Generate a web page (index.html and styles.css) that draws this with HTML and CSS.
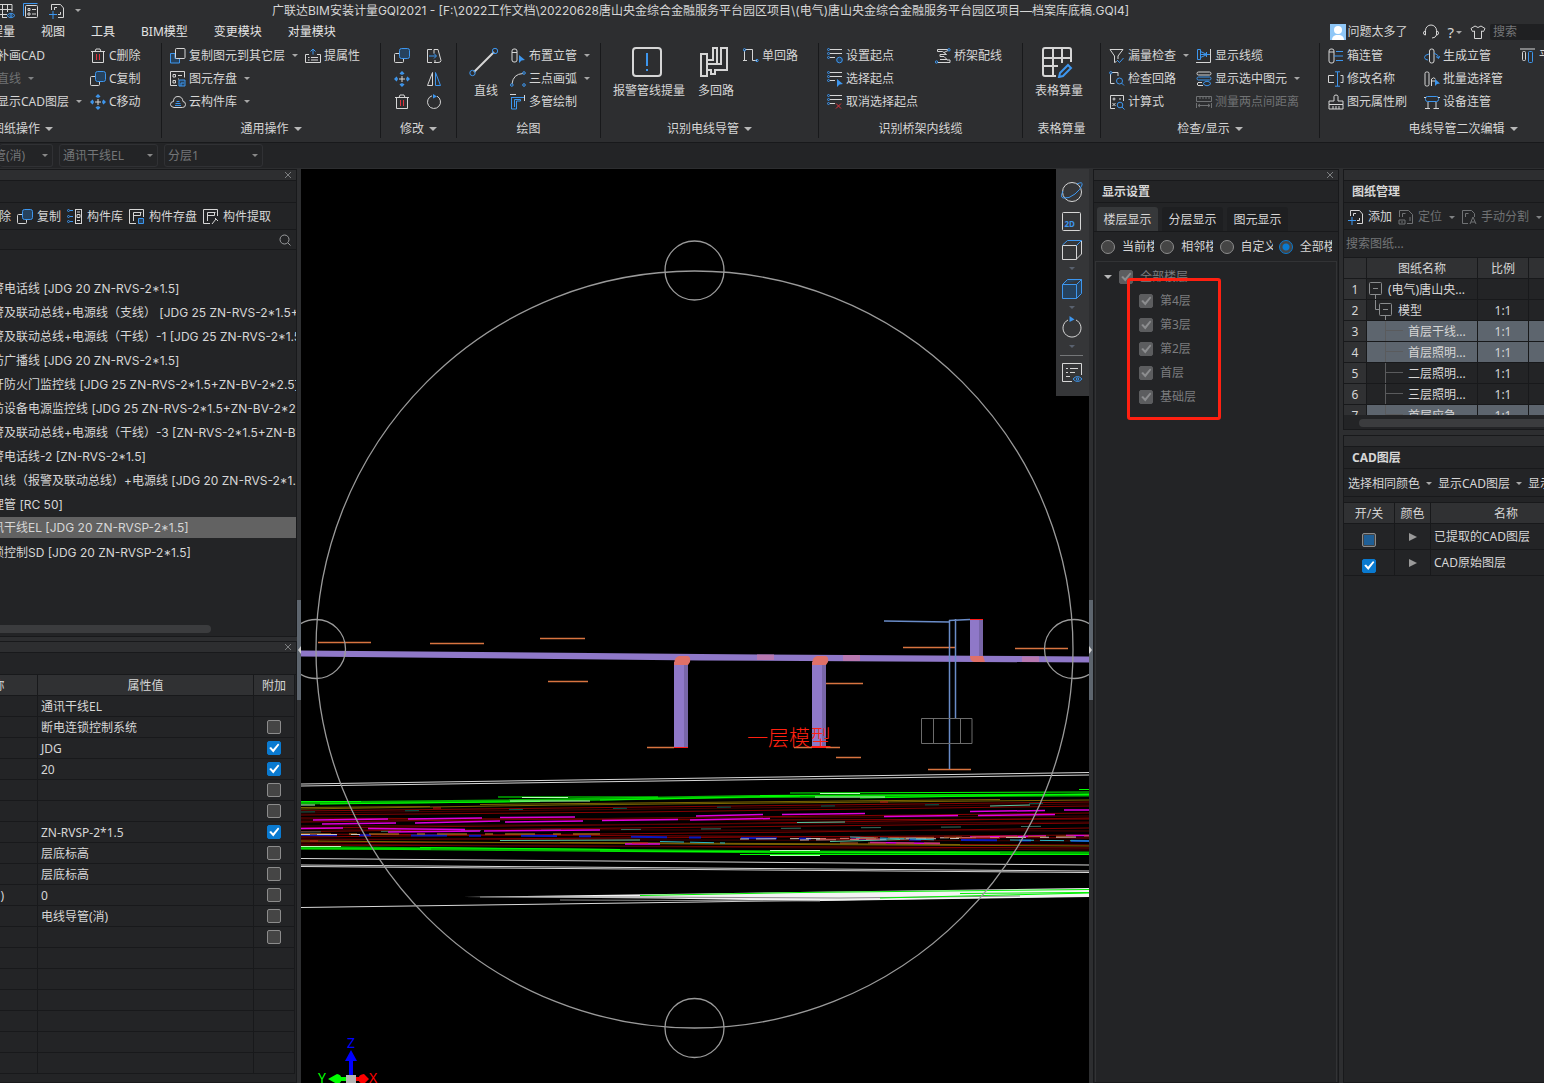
FILE: index.html
```html
<!DOCTYPE html>
<html lang="zh-CN">
<head>
<meta charset="utf-8">
<title>广联达BIM安装计量GQI2021</title>
<link rel="stylesheet" href="styles.css">
</head>
<body>
<svg class="defs" aria-hidden="true">
  <symbol id="grid-eye" viewBox="0 0 16 16"><path d="M0 1.500h12v7M0 6.500h12M0 11.500h7M2.500 1v13M7.500 1v8M2 14.500h5"/><path class="b" d="M7 12.500q4-4.500 8 0q-4 4.500-8 0z"/><circle class="b" cx="11" cy="12.500" r="1"/></symbol>
  <symbol id="doc-list" viewBox="0 0 16 16"><path class="b" d="M.5 13V.5h14"/><rect x="2.500" y="2.500" width="12" height="12" rx="1"/><path d="M5 5.500h2v2H5zM5 10h2v2H5zM9 6.500h4M9 11h4"/></symbol>
  <symbol id="add-sheet" viewBox="0 0 16 16"><path d="M2.500 7V1.500h9l3 3.500v9.500H9M5.500 7V4.500H8M11.500 9v2.500H9"/><path class="b" d="M0 11.500h8M4 8v8"/></symbol>
  <symbol id="sheet-pin" viewBox="0 0 16 16"><path d="M1.500 8V1.500h9l4 4v9H9M4.500 8V4.500h3M12 8v4M1 11h6v4H1zM3 13h2"/></symbol>
  <symbol id="sheet-cut" viewBox="0 0 16 16"><path d="M7 14.500H1.500v-13h9l3 3V8M4.500 8V4.500h3M9 15l3-7 3 7M10 13h4"/></symbol>
  <symbol id="trash" viewBox="0 0 16 16"><path d="M1 3.500h14M5 3.500l1-2.500h4l1 2.500M2.500 3.500v11h11v-11"/><path class="r" d="M6.500 6v6M9.500 6v6"/></symbol>
  <symbol id="copy" viewBox="0 0 16 16"><path d="M5 5.500H1.500q-1 0-1 1v7q0 1 1 1h7q1 0 1-1V11"/><rect class="bf" x="5.500" y=".5" width="10" height="10" rx="2"/></symbol>
  <symbol id="copy-to" viewBox="0 0 16 16"><path class="bf" d="M5 5.500H.5v9.500h9V10.500H5z"/><rect x="5.500" y=".5" width="9.500" height="10" rx="1"/></symbol>
  <symbol id="move" viewBox="0 0 16 16"><path d="M8 5v6M5 8h6"/><path class="b2s" d="M6 3l2-2 2 2M6 13l2 2 2-2M3 6L1 8l2 2M13 6l2 2-2 2M8 1v3M8 12v3M1 8h3M12 8h3"/></symbol>
  <symbol id="store" viewBox="0 0 16 16"><path d="M7 14.500H.5V.5h14v6M3 3.500h2.500V6H3zM3 9.500h2.500V12H3zM8 4.500h4M8 8h1"/><path class="bf" d="M9 9h6v6H9zM11 15v-3h3"/></symbol>
  <symbol id="cloud" viewBox="0 0 16 16"><path d="M4 13.500Q.5 13 .5 10.500q0-3 3-3Q3.500 2.500 8 2.500t5 5q2.500 0 2.500 3t-3 3z"/><path class="b" d="M5 11.500h6M5.500 9.500h5M6.500 7.500h3"/></symbol>
  <symbol id="attr-up" viewBox="0 0 16 16"><path d="M4 6.500H.5v8h15v-8H12M3 9.500h1.500M6 9.500h7M3 12h1.500M6 12h7"/><path class="b" d="M8 6.500V1M5.500 3.500L8 1l2.500 2.500"/></symbol>
  <symbol id="extend" viewBox="0 0 16 16"><path d="M6 1.500H1.500v13H6M8 1.500h4l3 11q0 2-3 2H8M8 1.500v4M9 12v2"/><path class="b" d="M3 8h7M8 5.500L10.500 8 8 10.500"/></symbol>
  <symbol id="flip" viewBox="0 0 16 16"><path d="M6.500 1.500v13H1.500z"/><path class="b" d="M9.500 1.500v13H14.500z"/></symbol>
  <symbol id="rotate" viewBox="0 0 16 16"><path d="M6 1.800A6.500 6.500 0 1 0 11 2.200"/><path class="bfill" d="M7 0l4 2.500L7 4.500z"/></symbol>
  <symbol id="orbit-turn" viewBox="0 0 24 24"><path d="M8 4A9 9 0 1 0 16 4"/><path class="bfill" d="M9.500 0l5 3.500-5 2.500z"/></symbol>
  <symbol id="pipe" viewBox="0 0 16 16"><rect x="2" y="1" width="5" height="13" rx="2"/><path d="M2 4.500h5"/><path class="bfill" d="M9 7l6 5-3.500.5L9 15z"/></symbol>
  <symbol id="arc" viewBox="0 0 16 16"><path d="M2 13Q3 3 13 2.500"/><circle class="b" cx="1.800" cy="14" r="1.300"/><circle class="b" cx="14" cy="2" r="1.300"/><circle class="b" cx="14" cy="14" r="1.300"/></symbol>
  <symbol id="multi" viewBox="0 0 16 16"><path class="b" d="M1.500 3v12h5V7h4V5.500H4.500V13M1.500 3.500h13"/><path d="M0 .5h6M14.500 1v6"/></symbol>
  <symbol id="single" viewBox="0 0 16 16"><path d="M1.500 2.500v10M2 1.500h7.500v11H14M0 12.500h4"/><circle class="b" cx="1.500" cy="1.800" r="1.200"/><circle class="b" cx="14" cy="12.500" r="1.200"/></symbol>
  <symbol id="lines" viewBox="0 0 16 16"><path d="M3 1.500h12M3 5.500h12M3 9.500h5"/><circle class="b" cx="1.500" cy="1.500" r="1"/><circle class="b" cx="1.500" cy="5.500" r="1"/><circle class="b" cx="1.500" cy="9.500" r="1"/></symbol>
  <symbol id="start-set" viewBox="0 0 16 16"><use href="#lines"/><circle class="bf" cx="12.500" cy="12" r="2.800"/></symbol>
  <symbol id="start-pick" viewBox="0 0 16 16"><use href="#lines"/><path class="bfill" d="M10 8l6 5-3.500.5L10 16z"/></symbol>
  <symbol id="start-cancel" viewBox="0 0 16 16"><use href="#lines"/><path class="r" d="M9 9.500l5 5M14 9.500l-5 5"/></symbol>
  <symbol id="bridge" viewBox="0 0 16 16"><path d="M13 1.500H2.500v2h5l4 3H5v2h4l3 3H5M3 14.500h12v-2.500h-3M13 2.500L9 4.500"/><circle class="b" cx="14" cy="1.800" r="1.200"/><circle class="b" cx="1.500" cy="14" r="1.200"/></symbol>
  <symbol id="funnel" viewBox="0 0 16 16"><path d="M1 1.500h13L9 8v3M1 1.500L5.500 8v6.500l2-1"/><path class="b" d="M8 12l2.500 2.500L14.500 10"/></symbol>
  <symbol id="loop-check" viewBox="0 0 16 16"><path d="M1.500 3v9.500h4M3 1.500h6V5"/><circle class="b" cx="1.800" cy="1.800" r="1.200"/><circle class="b" cx="10.500" cy="10" r="3"/><path class="b" d="M12.500 12l2.500 2.500"/></symbol>
  <symbol id="formula" viewBox="0 0 16 16"><path d="M6 14.500H1.500v-13h13V7M3.500 5h3M5 3.500v3M3.500 9l3 3M6.500 9l-3 3M10 5h2"/><circle class="b" cx="11" cy="11" r="2.800"/><path class="b" d="M13 13l2.500 2.500"/></symbol>
  <symbol id="cable" viewBox="0 0 16 16"><path d="M0 14.500h14.500V1"/><path class="b" d="M1.500 1.500h3v10h-3zM4.500 3.500L10 6M4.500 9.500L10 7M5 6.500h9M10.500 4v5"/></symbol>
  <symbol id="show-sel" viewBox="0 0 16 16"><rect x="1" y="1" width="14" height="3" rx="1.500"/><rect class="b" x="1" y="6" width="14" height="3" rx="1.500"/><path d="M7 14.500H2q-1.500-1.500 0-3h4"/><path class="b" d="M7 12.500q4-4.500 8 0q-4 4.500-8 0z"/></symbol>
  <symbol id="measure" viewBox="0 0 16 16"><path d="M.5 2.500h15v5H.5zM4 3v2M7 3v2M10 3v2M13 3v2M.5 9v5M15.500 9v5M2 11.500h12M4 10l-2 1.500 2 1.500M12 10l2 1.500-2 1.500"/></symbol>
  <symbol id="box-pipe" viewBox="0 0 16 16"><rect x="1" y="1" width="5" height="14" rx="2"/><path d="M1 4h5"/><path class="b" d="M8 3.500h7M6 8h9M8 12.500h7"/></symbol>
  <symbol id="rename" viewBox="0 0 16 16"><path d="M6 4.500H.5v7H6M12.500 4.500h2.500v7h-2.500"/><path class="b" d="M9.500 1v14M7 .8h5M7 15.200h5"/></symbol>
  <symbol id="brush" viewBox="0 0 16 16"><path d="M6 7V2.500q0-1.500 2-1.500t2 1.500V7h5v3.500H1V7zM1 10.500V15h14v-4.500M5 12v3M8 12v3M11 12v3"/></symbol>
  <symbol id="riser" viewBox="0 0 16 16"><rect x="5.500" y="1" width="4.500" height="14" rx="2"/><path class="b" d="M5 6Q0 7 .5 9.500T4 12M10 5q5 2 4.500 5M12 8.500l2.500 2L16 8"/></symbol>
  <symbol id="batch" viewBox="0 0 16 16"><rect x="1" y="1" width="4" height="14" rx="1.500"/><path d="M7.500 15V8q2.500-2.500 4 0M7.500 10h4"/><path class="bfill" d="M11 8l5 4.500-3 .5-2 2z"/></symbol>
  <symbol id="device" viewBox="0 0 16 16"><rect class="b" x="1.500" y="2.500" width="13" height="5" rx="2"/><path d="M4 8v6.500M12 8v6.500M1 14.500h5M9.500 14.500H15M0 3.500h2M14 3.500h2"/></symbol>
  <symbol id="align" viewBox="0 0 16 16"><path d="M0 1h15"/><rect x="2.500" y="3.500" width="3" height="9" rx="1"/><rect class="b" x="8.500" y="3.500" width="4" height="11" rx="1"/></symbol>
  <symbol id="lib" viewBox="0 0 16 16"><rect x="8.500" y=".5" width="6" height="14"/><path d="M10 3h3M10 5.500h3v3h-3zM10 11.500h3"/><path class="b" d="M3 1.500h3M3 7.500h3M3 12.500h3"/><circle class="b" cx="1.500" cy="1.500" r="1"/><circle class="b" cx="1.500" cy="7.500" r="1"/><circle class="b" cx="1.500" cy="12.500" r="1"/></symbol>
  <symbol id="part-save" viewBox="0 0 16 16"><path d="M7 14.500H.5v-14h14V8M4.500 12V3.500h8M4.500 6.500h7v-3"/><path class="bf" d="M9.500 9.500h5v5h-5z"/></symbol>
  <symbol id="part-pick" viewBox="0 0 16 16"><path d="M7 14.500H.5v-14h14V7M4.500 12V3.500h8M4.500 6.500h7v-3M9 15l4-5M12 9l3 3"/></symbol>
  <symbol id="search" viewBox="0 0 16 16"><circle cx="7.500" cy="7.500" r="4.500"/><path d="M11 11l2.500 2.500"/></symbol>
  <symbol id="close" viewBox="0 0 8 8"><path d="M1 1l6 6M7 1L1 7"/></symbol>
  <symbol id="headset" viewBox="0 0 16 16"><path d="M2.500 8V6.500a5.500 5.500 0 0 1 11 0V8M2.500 7Q.5 7 .5 9t2 2zM13.500 7q2 0 2 2t-2 2zM13.500 11q-1 3-4.500 3"/></symbol>
  <symbol id="shirt" viewBox="0 0 16 16"><path d="M5 2q3 3 6 0l4 2.500-1.500 3-2-.5v7.500h-7V7l-2 .5L1 4.500z"/></symbol>
  <symbol id="big-line" viewBox="0 0 32 32"><path class="w2" d="M6 26L26 6"/><circle class="b" cx="4.500" cy="27" r="2.700"/><circle class="b" cx="27" cy="5" r="2.700"/></symbol>
  <symbol id="big-alarm" viewBox="0 0 32 32"><rect class="w2" x="2" y="2" width="28" height="28" rx="3"/><path class="b2" d="M16 7v13M16 23v2"/></symbol>
  <symbol id="big-loop" viewBox="0 0 32 32"><path class="w2" d="M3 30V8h6v22zM9 14h6V2h4v16H9M19 18h4V2h6v22H17v4h-4v-4H9"/></symbol>
  <symbol id="big-table" viewBox="0 0 32 32"><path class="w2" d="M15 30H4q-2 0-2-2V4q0-2 2-2h24q2 0 2 2v12M2 12h28M2 20h15M12 2v28M21 2v15"/><path class="b2" d="M19 27l8-8 3 3-8 8-4 1z"/></symbol>
  <symbol id="orbit" viewBox="0 0 24 24"><circle cx="12" cy="12" r="9.500"/><path class="b" d="M17 4q6-3 5 1t-7 9-12 4q-3-1 0-7"/></symbol>
  <symbol id="view-2d" viewBox="0 0 24 24"><rect x="2.500" y="3.500" width="18" height="18" rx="1"/></symbol>
  <symbol id="cube" viewBox="0 0 24 24"><path d="M2.500 7.500h14v14h-14zM16.500 21l5-5V3"/><path class="b" d="M2.500 7l5-4.500H21.500l-5 5"/></symbol>
  <symbol id="cube-solid" viewBox="0 0 24 24"><path class="bf" d="M2.500 7.500h14v14h-14zM16.500 21.500l5-5v-14l-5 5M2.500 7.500l5-5h14"/></symbol>
  <symbol id="view-list" viewBox="0 0 24 24"><path d="M12 20.500H2.500v-18h19V14M6 7.500h2M10 7.500h8M6 11.500h2M10 11.500h5M6 15.500h4"/><path class="b" d="M13 18q4.500-5 9 0q-4.500 5-9 0z"/><circle class="b" cx="17.500" cy="18" r="1.200"/></symbol>
  <symbol id="branch" viewBox="0 0 36 20"><path d="M18.500 0v20M19 9.500h17"/></symbol>
  <symbol id="node-root" viewBox="0 0 16 20"><rect x="2.500" y="3.500" width="12" height="12" rx="1"/><path d="M6 9.500h5M8.500 16v4"/></symbol>
  <symbol id="node-sub" viewBox="0 0 26 20"><rect x="12.500" y="3.500" width="12" height="12" rx="1"/><path d="M16 9.500h5M18.500 16v4M8.500 0v9.500h4"/></symbol>
</svg>

<header class="titlebar">
  <button class="quick" aria-label="工程量"><svg class="ico"><use href="#grid-eye"/></svg></button>
  <button class="quick" aria-label="列表"><svg class="ico"><use href="#doc-list"/></svg></button>
  <button class="quick" aria-label="添加图纸"><svg class="ico"><use href="#add-sheet"/></svg></button>
  <button class="quick more" aria-label="更多"><i class="caret"></i></button>
  <h1>广联达BIM安装计量GQI2021 - [F:\2022工作文档\20220628唐山央金综合金融服务平台园区项目\(电气)唐山央金综合金融服务平台园区项目—档案库底稿.GQI4]</h1>
</header>

<nav class="menubar">
  <a href="#">程量</a><a href="#">视图</a><a href="#">工具</a><a href="#">BIM模型</a><a href="#">变更模块</a><a href="#">对量模块</a>
  <div class="account">
    <svg class="avatar" viewBox="0 0 16 16"><rect width="16" height="16" fill="#8fc7f7"/><circle cx="8" cy="6" r="4" fill="#fff"/><path d="M2 16q0-4 4-5h4q4 1 4 5z" fill="#fff"/></svg>
    <span class="user">问题太多了</span>
    <svg class="ico"><use href="#headset"/></svg>
    <button class="help">?<i class="caret"></i></button>
    <svg class="ico"><use href="#shirt"/></svg>
    <input class="find" type="text" placeholder="搜索" aria-label="搜索">
  </div>
</nav>

<section class="ribbon">
  <div class="group g-sheet">
    <div class="cmds">
      <button>补画CAD</button>
      <button disabled>直线<i class="caret"></i></button>
      <button>显示CAD图层<i class="caret"></i></button>
      <button><svg class="ico"><use href="#trash"/></svg>C删除</button>
      <button><svg class="ico"><use href="#copy"/></svg>C复制</button>
      <button><svg class="ico"><use href="#move"/></svg>C移动</button>
    </div>
    <div class="label">图纸操作<i class="caret big"></i></div>
  </div>
  <div class="group g-common">
    <div class="cmds">
      <button><svg class="ico"><use href="#copy-to"/></svg>复制图元到其它层<i class="caret"></i></button>
      <button><svg class="ico"><use href="#store"/></svg>图元存盘<i class="caret"></i></button>
      <button><svg class="ico"><use href="#cloud"/></svg>云构件库<i class="caret"></i></button>
      <button><svg class="ico"><use href="#attr-up"/></svg>提属性</button>
    </div>
    <div class="label">通用操作<i class="caret big"></i></div>
  </div>
  <div class="group g-edit">
    <div class="cmds">
      <button aria-label="复制"><svg class="ico"><use href="#copy"/></svg></button>
      <button aria-label="移动"><svg class="ico"><use href="#move"/></svg></button>
      <button aria-label="删除"><svg class="ico"><use href="#trash"/></svg></button>
      <button aria-label="延伸"><svg class="ico"><use href="#extend"/></svg></button>
      <button aria-label="镜像"><svg class="ico"><use href="#flip"/></svg></button>
      <button aria-label="旋转"><svg class="ico"><use href="#rotate"/></svg></button>
    </div>
    <div class="label">修改<i class="caret big"></i></div>
  </div>
  <div class="group g-draw">
    <div class="cmds">
      <button class="large"><svg><use href="#big-line"/></svg>直线</button>
      <button><svg class="ico"><use href="#pipe"/></svg>布置立管<i class="caret"></i></button>
      <button><svg class="ico"><use href="#arc"/></svg>三点画弧<i class="caret"></i></button>
      <button><svg class="ico"><use href="#multi"/></svg>多管绘制</button>
    </div>
    <div class="label">绘图</div>
  </div>
  <div class="group g-wire">
    <div class="cmds">
      <button class="large"><svg><use href="#big-alarm"/></svg>报警管线提量</button>
      <button class="large"><svg><use href="#big-loop"/></svg>多回路</button>
      <button><svg class="ico"><use href="#single"/></svg>单回路</button>
    </div>
    <div class="label">识别电线导管<i class="caret big"></i></div>
  </div>
  <div class="group g-bridge">
    <div class="cmds">
      <button><svg class="ico"><use href="#start-set"/></svg>设置起点</button>
      <button><svg class="ico"><use href="#start-pick"/></svg>选择起点</button>
      <button><svg class="ico"><use href="#start-cancel"/></svg>取消选择起点</button>
      <button><svg class="ico"><use href="#bridge"/></svg>桥架配线</button>
    </div>
    <div class="label">识别桥架内线缆</div>
  </div>
  <div class="group g-table">
    <div class="cmds">
      <button class="large"><svg><use href="#big-table"/></svg>表格算量</button>
    </div>
    <div class="label">表格算量</div>
  </div>
  <div class="group g-check">
    <div class="cmds">
      <button><svg class="ico"><use href="#funnel"/></svg>漏量检查<i class="caret"></i></button>
      <button><svg class="ico"><use href="#loop-check"/></svg>检查回路</button>
      <button><svg class="ico"><use href="#formula"/></svg>计算式</button>
      <button><svg class="ico"><use href="#cable"/></svg>显示线缆</button>
      <button><svg class="ico"><use href="#show-sel"/></svg>显示选中图元<i class="caret"></i></button>
      <button disabled><svg class="ico"><use href="#measure"/></svg>测量两点间距离</button>
    </div>
    <div class="label">检查/显示<i class="caret big"></i></div>
  </div>
  <div class="group g-second">
    <div class="cmds">
      <button><svg class="ico"><use href="#box-pipe"/></svg>箱连管</button>
      <button><svg class="ico"><use href="#rename"/></svg>修改名称</button>
      <button><svg class="ico"><use href="#brush"/></svg>图元属性刷</button>
      <button><svg class="ico"><use href="#riser"/></svg>生成立管</button>
      <button><svg class="ico"><use href="#batch"/></svg>批量选择管</button>
      <button><svg class="ico"><use href="#device"/></svg>设备连管</button>
      <button><svg class="ico"><use href="#align"/></svg>平</button>
    </div>
    <div class="label">电线导管二次编辑<i class="caret big"></i></div>
  </div>
</section>

<div class="pickers">
  <span class="pick"><select disabled aria-label="构件类型"><option>管(消)</option></select><i class="caret"></i></span>
  <span class="pick"><select disabled aria-label="构件"><option>通讯干线EL</option></select><i class="caret"></i></span>
  <span class="pick"><select disabled aria-label="分层"><option>分层1</option></select><i class="caret"></i></span>
</div>

<main class="work">
  <aside class="dock">
    <section class="panel parts">
      <div class="strip"><button aria-label="关闭"><svg><use href="#close"/></svg></button></div>
      <div class="head"></div>
      <div class="tools">
        <button class="cut">除</button>
        <button><svg class="ico"><use href="#copy"/></svg>复制</button>
        <button><svg class="ico"><use href="#lib"/></svg>构件库</button>
        <button><svg class="ico"><use href="#part-save"/></svg>构件存盘</button>
        <button><svg class="ico"><use href="#part-pick"/></svg>构件提取</button>
      </div>
      <div class="search"><input type="text" aria-label="搜索构件"><svg class="ico"><use href="#search"/></svg></div>
      <ul class="list">
        <li>警电话线 [JDG 20 ZN-RVS-2*1.5]</li>
        <li>警及联动总线+电源线（支线） [JDG 25 ZN-RVS-2*1.5+ZN-BV-2*2.5]</li>
        <li>警及联动总线+电源线（干线）-1 [JDG 25 ZN-RVS-2*1.5+ZN-BV-2*2.5]</li>
        <li>防广播线 [JDG 20 ZN-RVS-2*1.5]</li>
        <li>开防火门监控线 [JDG 25 ZN-RVS-2*1.5+ZN-BV-2*2.5]</li>
        <li>防设备电源监控线 [JDG 25 ZN-RVS-2*1.5+ZN-BV-2*2.5]</li>
        <li>警及联动总线+电源线（干线）-3 [ZN-RVS-2*1.5+ZN-BV-2*2.5]</li>
        <li>警电话线-2 [ZN-RVS-2*1.5]</li>
        <li>讯线（报警及联动总线）+电源线 [JDG 20 ZN-RVS-2*1.5]</li>
        <li>埋管 [RC 50]</li>
        <li class="on">讯干线EL [JDG 20 ZN-RVSP-2*1.5]</li>
        <li>锁控制SD [JDG 20 ZN-RVSP-2*1.5]</li>
      </ul>
      <div class="hbar"></div>
    </section>
    <section class="panel props">
      <div class="strip"><button aria-label="关闭"><svg><use href="#close"/></svg></button></div>
      <div class="head"></div>
      <table>
        <colgroup><col class="c-name"><col><col class="c-add"></colgroup>
        <thead><tr><th>名称</th><th>属性值</th><th>附加</th></tr></thead>
        <tbody>
          <tr><td></td><td>通讯干线EL</td><td></td></tr>
          <tr><td></td><td>断电连锁控制系统</td><td><input type="checkbox" aria-label="附加 系统类型"></td></tr>
          <tr><td></td><td>JDG</td><td><input type="checkbox" checked aria-label="附加 导管材质"></td></tr>
          <tr><td></td><td>20</td><td><input type="checkbox" checked aria-label="附加 管径"></td></tr>
          <tr><td></td><td></td><td><input type="checkbox" aria-label="附加"></td></tr>
          <tr><td></td><td></td><td><input type="checkbox" aria-label="附加"></td></tr>
          <tr><td></td><td>ZN-RVSP-2*1.5</td><td><input type="checkbox" checked aria-label="附加 导线规格"></td></tr>
          <tr><td></td><td>层底标高</td><td><input type="checkbox" aria-label="附加 起点标高"></td></tr>
          <tr><td></td><td>层底标高</td><td><input type="checkbox" aria-label="附加 终点标高"></td></tr>
          <tr><td>)</td><td>0</td><td><input type="checkbox" aria-label="附加 长度"></td></tr>
          <tr><td></td><td>电线导管(消)</td><td><input type="checkbox" aria-label="附加 类型"></td></tr>
          <tr><td></td><td></td><td><input type="checkbox" aria-label="附加"></td></tr>
          <tr><td></td><td></td><td></td></tr>
          <tr><td></td><td></td><td></td></tr>
          <tr><td></td><td></td><td></td></tr>
          <tr><td></td><td></td><td></td></tr>
          <tr><td></td><td></td><td></td></tr>
          <tr><td></td><td></td><td></td></tr>
        </tbody>
      </table>
    </section>
  </aside>

  <div class="split"><i></i></div>

  <section class="stage">
    <svg class="scene" viewBox="301 169 788 914" preserveAspectRatio="xMidYMid slice">
      <!-- storey outlines -->
      <g stroke="#d8d8d8" stroke-width="1">
        <path d="M301 784L1089 772.500M301 786L1089 775M301 858.500L1089 865M301 865L1089 871M301 866.500L1089 872.500M301 907.500L700 902 1089 896"/>
      </g>
      <path d="M463 897L700 893.500 1089 888V897L820 901 660 898.500z" fill="#f4f4f4"/>
      <path d="M480 897h160l200 1 180-2M560 900l260 1" stroke="#8a8a8a"/>
      <path d="M640 895.500L800 892.500 1089 889.500M880 898l209-5M960 893.500l129-1" stroke="#00f000" stroke-width="1"/>
      <!-- green outlines of the cable zone -->
      <g stroke="#00b400" stroke-width="3"><path d="M301 803L500 801 750 796.500 1089 795M301 847.500L500 849.500 800 852 1089 853"/></g>
      <g stroke="#00ff00" stroke-width="1"><path d="M301 801.500h60M320 804l220-2.500M498 797h160M600 800l200-4M760 795.500l329-1M860 798l229-4M301 849h130M420 847.500l200 2M600 851l400 2M740 854.500l349 0M1079 789.500h10M790 793l299-1"/></g>
      <path d="M522 797.500h46M820 793.500h40M301 805h14M301 846.500h40M815 797h70M770 855.500h50M770 850.500h50M510 801h80" stroke="#b8ffb8"/>
      <!-- dark red runs -->
      <g stroke="#860000">
        <path d="M301 811L1089 802M301 815L640 812 1089 806M301 822L1089 813M301 828L700 824 1089 818M301 831.500L1089 823M301 837L800 832 1089 828M301 840L1089 835M301 842L1089 845M301 845L1089 848M301 834L1089 838M301 818L760 820 1089 819"/>
      </g>
      <g stroke="#4a0000"><path d="M301 813L1089 804M301 820L1089 816M301 826L1089 822M301 839L1089 841M301 829L1089 831M301 844L1089 850"/></g>
      <g stroke="#7c6600"><path d="M301 809L560 805 1089 800M301 807.500L430 806.500M480 804.500L1000 799.500M301 841L700 844 1089 846M560 842.500L960 844.500"/></g>
      <path d="M301 812L1089 803" stroke="#006050" stroke-dasharray="14 90"/>
      <path d="M301 832L1089 826" stroke="#3a7060" stroke-dasharray="20 60"/>
      <!-- magenta runs -->
      <g stroke="#e000e0" stroke-width="1.500">
        <path d="M313 820L388 819M322 824L396 823M408 819L482 818M415 823L500 821M368 828.500L465 829.500M500 817.500L575 817M505 822L583 821M484 831L600 830M388 832L480 831M602 820.500L678 819.500M690 820L770 818.500M696 816L763 814.500M782 814.500L865 813.500M884 816.500L958 815.500M970 811.500L1045 810.500M978 815.500L1055 814.500M1064 810L1089 810M301 828.500L343 828M870 842.500L940 843.500M970 837L1046 836M1066 835.500L1089 835.500M625 844L660 844"/>
      </g>
      <!-- mixed wiring -->
      <path d="M301 835L560 836 840 839 1089 841" stroke="#0a18c0" stroke-width="2" stroke-dasharray="36 22 12 40"/>
      <path d="M301 834L600 834" stroke="#c98a20" stroke-dasharray="30 18 8 12"/>
      <path d="M301 834.500L360 834.500M800 840L960 838.500M740 839L1089 837" stroke="#d0c8c0" stroke-dasharray="9 7 20 14"/>
      <path d="M660 841.500L725 843M1010 840L1089 841M850 837l90 3" stroke="#2ab8c8" stroke-dasharray="24 6"/>
      <path d="M500 840.500L640 840M830 841.500L900 839.500M797 822.500L845 822M990 806l40-1" stroke="#58c8a0"/>
      <path d="M433 808h8M632 843h16M880 802h8M310 841h8M820 839h60M960 838h40" stroke="#d01818"/>
      <path d="M860 838L1089 836M840 843l100 0" stroke="#b05a28" stroke-dasharray="18 10"/>
      <!-- main conduit and drops -->
      <path d="M301 650.500L700 654 1089 656.500V662.500L700 660.500 301 656.500z" fill="#8f78c8"/>
      <g fill="#8f78c8"><path d="M674 662h14v85h-14zM812 662h14v85h-14zM970 620h13v38h-13z"/></g>
      <g fill="#7866a8"><path d="M684 664h4v83h-4zM822 664h4v83h-4zM979 620h4v38h-4z"/></g>
      <g fill="#b878b0"><path d="M757 654.500h17v5.500h-17zM843 655h17v6h-17zM1022 656.500h17v5.500h-17z"/></g>
      <g fill="#e07068"><path d="M674 665q0-8 5-9h8q4 0 3 6l-2 3zM812 665q0-8 5-9h8q4 0 3 6l-2 3zM970 656h13l2 6h-11q-4-1-4-6z"/></g>
      <path d="M674 747.500h14M812 747.500h14M970 619.500h13" stroke="#ff1a1a"/>
      <!-- fixtures -->
      <g stroke="#d87440" stroke-width="1.500"><path d="M318 642.500H371M430 643.500H484M540 638.500H585M548 681.500H588M647 747.500H674M826 683.500H863M794 747.500H812M826 747.500H840M836 757.500H861M903 647.500H956M1015 648.500H1068M928 769.500H971"/></g>
      <g stroke="#6a8cc8" stroke-width="1.500"><path d="M884 621L949 622M949.500 620V769M955.500 619V718M949 620.500L970 619.500"/></g>
      <path d="M921.500 718.500H972V743.500H921.500zM933.500 718V743M960.500 718V743" stroke="#6c6c6c"/>
      <text class="mark" x="747" y="745">一层模型</text>
      <!-- orbit gizmo -->
      <g stroke="#9a9a9a" stroke-width="1.300">
        <circle cx="694.500" cy="649.500" r="378.500"/>
        <circle cx="694.500" cy="270.500" r="29.500"/><circle cx="316" cy="649" r="29.500"/><circle cx="1074" cy="649" r="29.500"/><circle cx="694.500" cy="1028" r="29.500"/>
      </g>
      <!-- axis triad -->
      <path d="M351 1050l6 11h-4v15h-4v-15h-4z" fill="#0000ff"/>
      <path d="M328 1079l9-5q4 1 4 3h6v4h-6q0 2-4 3z" fill="#00ff00"/>
      <path d="M369 1079l-5-5q-5 1-5 3h-3v4h3q0 2 5 3z" fill="#ff0000"/>
      <path d="M346 1075h10v9h-10z" fill="#b4b4b4"/>
      <text class="axis" x="347" y="1048" fill="#0000ff">Z</text>
      <text class="axis" x="318" y="1083" fill="#00ff00">Y</text>
      <text class="axis" x="369" y="1083" fill="#ff0000">X</text>
    </svg>
    <div class="viewtools">
      <button aria-label="动态观察"><svg><use href="#orbit"/></svg></button>
      <button class="two" aria-label="二维"><svg><use href="#view-2d"/></svg><span>2D</span></button>
      <button aria-label="线框"><svg><use href="#cube"/></svg></button><i class="caret"></i>
      <button aria-label="实体"><svg><use href="#cube-solid"/></svg></button><i class="caret"></i>
      <button aria-label="旋转"><svg><use href="#orbit-turn"/></svg></button><i class="caret"></i>
      <hr>
      <button aria-label="显示设置"><svg><use href="#view-list"/></svg></button>
    </div>
  </section>

  <div class="split"><i class="right"></i></div>

  <section class="panel display">
    <div class="strip"><button aria-label="关闭"><svg><use href="#close"/></svg></button></div>
    <h2 class="head">显示设置</h2>
    <div class="tabs"><button class="on">楼层显示</button><button>分层显示</button><button>图元显示</button></div>
    <div class="radios">
      <label><input type="radio" name="floor"><span>当前楼层</span></label>
      <label><input type="radio" name="floor"><span>相邻楼层</span></label>
      <label><input type="radio" name="floor"><span>自定义楼层</span></label>
      <label><input type="radio" name="floor" checked><span>全部楼层</span></label>
    </div>
    <div class="tree">
      <div class="root"><i class="caret big"></i><label><input type="checkbox" checked disabled>全部楼层</label></div>
      <div class="kids">
        <label><input type="checkbox" checked disabled>第4层</label>
        <label><input type="checkbox" checked disabled>第3层</label>
        <label><input type="checkbox" checked disabled>第2层</label>
        <label><input type="checkbox" checked disabled>首层</label>
        <label><input type="checkbox" checked disabled>基础层</label>
      </div>
      <div class="callout"></div>
    </div>
  </section>

  <div class="gap"></div>

  <aside class="dock">
    <section class="panel sheets">
      <div class="strip"></div>
      <h2 class="head">图纸管理</h2>
      <div class="tools">
        <button><svg class="ico"><use href="#add-sheet"/></svg>添加</button>
        <button disabled><svg class="ico"><use href="#sheet-pin"/></svg>定位<i class="caret"></i></button>
        <button disabled><svg class="ico"><use href="#sheet-cut"/></svg>手动分割<i class="caret"></i></button>
      </div>
      <input class="filter" type="text" placeholder="搜索图纸..." aria-label="搜索图纸">
      <div class="clip">
        <table>
          <colgroup><col class="c-no"><col class="c-sheet"><col class="c-scale"><col></colgroup>
          <thead><tr><th></th><th>图纸名称</th><th>比例</th><th></th></tr></thead>
          <tbody>
            <tr><th>1</th><td><div class="node"><svg><use href="#node-root"/></svg><span>(电气)唐山央...</span></div></td><td></td><td></td></tr>
            <tr><th>2</th><td><div class="node deep"><svg><use href="#node-sub"/></svg><span>模型</span></div></td><td>1:1</td><td></td></tr>
            <tr class="on"><th>3</th><td><div class="leaf"><svg><use href="#branch"/></svg><span>首层干线...</span></div></td><td>1:1</td><td></td></tr>
            <tr class="on"><th>4</th><td><div class="leaf"><svg><use href="#branch"/></svg><span>首层照明...</span></div></td><td>1:1</td><td></td></tr>
            <tr><th>5</th><td><div class="leaf"><svg><use href="#branch"/></svg><span>二层照明...</span></div></td><td>1:1</td><td></td></tr>
            <tr><th>6</th><td><div class="leaf"><svg><use href="#branch"/></svg><span>三层照明...</span></div></td><td>1:1</td><td></td></tr>
            <tr class="on"><th>7</th><td><div class="leaf"><svg><use href="#branch"/></svg><span>首层应急</span></div></td><td>1:1</td><td></td></tr>
          </tbody>
        </table>
      </div>
      <div class="hbar"></div>
    </section>
    <section class="panel layers">
      <div class="strip"></div>
      <h2 class="head">CAD图层</h2>
      <div class="tools">
        <button>选择相同颜色<i class="caret"></i></button>
        <button>显示CAD图层<i class="caret"></i></button>
        <button>显示</button>
      </div>
      <table>
        <colgroup><col class="c-on"><col class="c-color"><col></colgroup>
        <thead><tr><th>开/关</th><th>颜色</th><th>名称</th></tr></thead>
        <tbody>
          <tr><td><input type="checkbox" class="part" aria-label="已提取的CAD图层"></td><td><i class="play"></i></td><td>已提取的CAD图层</td></tr>
          <tr><td><input type="checkbox" checked aria-label="CAD原始图层"></td><td><i class="play"></i></td><td>CAD原始图层</td></tr>
        </tbody>
      </table>
    </section>
  </aside>
</main>
</body>
</html>
```
FILE: styles.css
```css
* { box-sizing: border-box; }

:root {
  --bar: #2d2e30;
  --body: #232426;
  --line: #18191b;
  --text: #d6d6d6;
  --dim: #747678;
  --blue: #3d96ee;
  --steel: #5d656e;
}

body {
  margin: 0;
  height: 100vh;
  overflow: hidden;
  display: flex;
  flex-direction: column;
  background: var(--bar);
  color: var(--text);
  font: 12px/20px "Noto Sans", "Noto Sans CJK SC", sans-serif;
  white-space: nowrap;
}

button, input, select {
  font: inherit;
  color: inherit;
  background: none;
  border: 0;
  margin: 0;
  padding: 0;
}

button { display: inline-flex; align-items: center; white-space: nowrap; }
button:disabled { color: #707274; }
h1, h2 { margin: 0; font-size: 12px; font-weight: 400; }
a { color: inherit; text-decoration: none; }

/* icons */
.defs { position: absolute; width: 0; height: 0; }
svg { fill: none; stroke: currentColor; stroke-width: 1; flex: none; }
.ico { width: 16px; height: 16px; }
.b { stroke: var(--blue); }
.b2 { stroke: var(--blue); stroke-width: 2; }
.b2s { stroke: var(--blue); stroke-width: 1.4; }
.w2 { stroke-width: 2; }
.r { stroke: #e0333c; }
.bf { stroke: var(--blue); fill: #26425e; }
.bfill { stroke: none; fill: var(--blue); }

.caret {
  display: inline-block;
  flex: none;
  border: 3px solid transparent;
  border-top-color: #a8a8a8;
  border-bottom: 0;
}
.caret.big { border-width: 4px; border-bottom: 0; border-top-color: #b8b8b8; }
button:disabled .caret { border-top-color: #808284; }

/* title and menus */
.titlebar { display: flex; align-items: center; height: 21px; flex: none; font-family: Inter, "Noto Sans CJK SC", sans-serif; }
.quick { width: 26px; height: 20px; }
.quick:first-child { width: 23px; }
.quick.more { width: 180px; }
.titlebar h1 { padding-left: 17px; overflow: hidden; }

.menubar {
  display: flex;
  align-items: center;
  gap: 26px;
  height: 22px;
  margin-left: -9px;
  flex: none;
  color: #e4e4e4;
}
.account { display: flex; align-items: center; margin-left: auto; color: var(--text); }
.avatar { width: 16px; height: 16px; stroke: none; }
.user { margin: 0 16px 0 1px; }
.help { gap: 2px; margin: 0 8px; font-size: 15px; }
.find {
  width: 54px;
  height: 16px;
  margin-left: 4px;
  padding-left: 3px;
  background: #1f2022;
  border-radius: 2px 0 0 2px;
}
::placeholder { color: var(--dim); opacity: 1; }

/* ribbon */
.ribbon {
  display: grid;
  grid-template-columns: 162px 219px 76px 144px 218px 204px 78px 219px 1fr;
  height: 99px;
  flex: none;
  overflow: hidden;
}
.group {
  display: flex;
  flex-direction: column;
  height: 95px;
  padding-top: 1px;
  border-right: 1px solid var(--line);
  min-width: 0;
}
.group:last-child { border-right: 0; }
.cmds {
  display: grid;
  grid-template-rows: repeat(3, 23px);
  grid-auto-flow: column;
  justify-content: start;
  padding-left: 8px;
}
.cmds button { gap: 3px; }
.cmds .caret { margin-left: 4px; }
.cmds .large {
  grid-row: 1 / 4;
  flex-direction: column;
  gap: 3px;
  padding-top: 2px;
}
.large svg { width: 32px; height: 32px; margin-right: 4px; }
.label { display: flex; align-items: center; justify-content: center; gap: 5px; margin-top: 6px; }

.g-sheet .cmds { padding-left: 0; margin-left: -3px; grid-template-columns: 93px auto; }
.g-sheet .label { justify-content: start; margin-left: -8px; }
.g-common .cmds { grid-template-columns: 135px auto; }
.g-edit .cmds { padding-left: 13px; grid-template-columns: 32px 32px; }
.g-draw .cmds { padding-left: 11px; grid-template-columns: 42px auto; }
.g-draw .large { align-self: start; justify-self: start; }
.g-wire .cmds { padding-left: 12px; grid-template-columns: 85px 45px auto; }
.g-wire .large { justify-self: start; }
.g-bridge .cmds { grid-template-columns: 108px auto; }
.g-table .cmds { padding-left: 12px; }
.g-check .cmds { grid-template-columns: 87px auto; }
.g-second .cmds { grid-template-columns: 96px 96px auto; }
.g-second .label { padding-left: 62px; }

.pickers {
  display: flex;
  gap: 6px;
  height: 26px;
  flex: none;
  padding: 1px 0;
  background: var(--body);
  border-top: 1px solid var(--line);
}
.pick { position: relative; width: 99px; height: 23px; }
.pick:first-child { width: 53px; }
.pick select {
  appearance: none;
  width: 100%;
  height: 100%;
  padding: 0 3px;
  border: 1px solid #303134;
  border-radius: 3px;
  color: var(--dim);
  opacity: 1;
}
.pick:first-child select { padding: 0; border-left: 0; text-indent: -6px; }
.pick .caret { position: absolute; right: 5px; top: 10px; border-top-color: #888; }

/* work area */
.work {
  flex: 1;
  min-height: 0;
  display: grid;
  grid-template-columns: 297px 4px minmax(0, 1fr) 4px 246px 4px 201px;
  grid-template-rows: minmax(0, 1fr);
  padding-top: 1px;
}
.dock { display: flex; flex-direction: column; min-width: 0; overflow: hidden; background: var(--bar); }
.panel {
  display: flex;
  flex-direction: column;
  min-width: 0;
  overflow: hidden;
  background: var(--body);
  border: 1px solid var(--line);
}
.dock:first-child .panel { border-left: 0; }
.strip {
  display: flex;
  justify-content: flex-end;
  align-items: center;
  height: 11px;
  flex: none;
  padding-right: 4px;
  background: var(--bar);
  border-bottom: 1px solid var(--line);
}
.strip svg { width: 8px; height: 8px; stroke: #7c7e80; }
.head { height: 22px; flex: none; padding-left: 8px; border-bottom: 1px solid var(--line); font-weight: 700; line-height: 21px; }
.tools { display: flex; align-items: center; height: 27px; flex: none; padding-top: 2px; border-bottom: 1px solid var(--line); }
.tools button { flex: none; }

.split { position: relative; }
.split i { position: absolute; top: 431px; left: 0; width: 4px; height: 100px; background: var(--steel); }
.split i::after {
  content: "";
  position: absolute;
  top: 46px;
  left: 1px;
  border: 4px solid transparent;
  border-left: 0;
  border-right: 3px solid #d0d0d0;
}
.split i.right::after { left: 0; border-left: 3px solid #d0d0d0; border-right: 0; }

/* component list */
.parts { height: 468px; flex: none; }
.parts .tools button { gap: 4px; margin-right: 6px; }
.parts .tools .cut { margin-left: -1px; }
.search { display: flex; align-items: center; height: 20px; flex: none; padding-right: 3px; border-bottom: 1px solid var(--line); }
.search input { flex: 1; min-width: 0; }
.search .ico { stroke: #9a9c9e; }
.list { list-style: none; margin: 0; padding: 26px 0 0; flex: 1; min-height: 0; font-family: Inter, "Noto Sans CJK SC", sans-serif; }
.list li { height: 24px; padding: 3px 0 1px; text-indent: -8px; overflow: hidden; }
.list .on { height: 21px; margin: 1px 0 2px; padding: 1px 0 0; background: #626262; }
.hbar { flex: none; height: 8px; background: #3b3c3e; border-radius: 4px; }
.parts .hbar { width: 211px; margin-bottom: 3px; border-radius: 0 4px 4px 0; }

/* tables */
table { border-collapse: collapse; table-layout: fixed; }
th, td { height: 21px; padding: 2px 0 0; border: 1px solid var(--line); font-weight: 400; line-height: 18px; overflow: hidden; }
th { background: #303133; }
.props { flex: 1; margin-top: 4px; }
.props table { width: 348px; margin: -1px 0 0 -53px; }
.c-name { width: 90px; }
.c-add { width: 41px; }
.props td:first-child { text-align: right; padding-right: 33px; }
.props td:nth-child(2) { padding-left: 3px; }
.props td:last-child { padding: 0; }

input[type=checkbox] {
  appearance: none;
  display: block;
  width: 14px;
  height: 14px;
  margin: 0 auto;
  background: #454545;
  border: 1px solid #8c8c8c;
  border-radius: 2px;
  flex: none;
}
input[type=checkbox]:checked { background: #0a7ad0; border-color: #0a7ad0; }
input[type=checkbox]:checked::before {
  content: "";
  display: block;
  width: 12px;
  height: 12px;
  background: #fff;
  clip-path: polygon(10% 50%, 25% 42%, 42% 60%, 84% 12%, 94% 22%, 44% 88%);
}
input[type=checkbox]:disabled { background: #5c5d5f; border-color: #5c5d5f; }
input[type=checkbox]:disabled::before { background: #8c8d8f; }
input[type=checkbox].part { background: #1f5f96; box-shadow: inset 0 0 0 1px #454545; }

/* 3D view */
.stage { position: relative; overflow: hidden; background: #000; }
.scene { display: block; width: 100%; height: 100%; stroke: none; }
.mark { fill: #ff2010; font-size: 21px; font-family: "Noto Sans CJK SC", sans-serif; font-weight: 300; }
.axis { font-size: 14px; }
.viewtools {
  position: absolute;
  top: 0;
  right: 0;
  width: 33px;
  height: 227px;
  display: flex;
  flex-direction: column;
  align-items: center;
  padding: 11px 2px 0 0;
  background: #353638;
}
.viewtools button { position: relative; height: 24px; margin-bottom: 5px; }
.viewtools svg { width: 24px; height: 24px; }
.viewtools .two span { position: absolute; left: 5px; top: 10px; font-size: 8px; line-height: 10px; font-weight: 700; color: var(--blue); }
.viewtools .caret { margin-bottom: 7px; border-top-color: #59616e; }
.viewtools hr { width: 23px; height: 1px; margin: 0 0 5px; border: 0; background: #747678; }

/* display settings */
.tabs { display: flex; align-items: end; gap: 4px; height: 29px; flex: none; padding: 4px 3px 0; border-bottom: 1px solid var(--line); }
.tabs button { justify-content: center; width: 61px; height: 24px; padding-top: 2px; background: #1e1f21; border-radius: 3px 3px 0 0; }
.tabs .on { background: #36383a; }
.radios { display: grid; grid-template-columns: repeat(4, 1fr); height: 29px; flex: none; padding: 0 0 0 7px; }
.radios label { display: flex; align-items: center; gap: 7px; overflow: hidden; }
.radios span { width: 32px; overflow: hidden; }
.radios input { appearance: none; flex: none; width: 14px; height: 14px; border: 1px solid #8c8c8c; border-radius: 50%; background: #454545; }
.radios input:checked { border-color: #0a7ad0; background: radial-gradient(#0a7ad0 3px, #454545 4px); }
.tree { position: relative; flex: 1; margin: 0 1px; border: 1px solid #323335; border-bottom: 0; padding-top: 3px; color: #7c7d7f; }
.root { display: flex; align-items: center; gap: 7px; height: 24px; padding-left: 8px; }
.tree label { display: flex; align-items: center; gap: 7px; height: 24px; }
.tree input[type=checkbox] { margin: 0; }
.kids { padding-left: 43px; }
.callout { position: absolute; left: 31px; top: 16px; width: 94px; height: 142px; border: 3px solid #ff2011; border-radius: 3px; }

/* drawings and layers */
.sheets { height: 261px; flex: none; border-right: 0; }
.sheets .tools { gap: 6px; padding-left: 4px; }
.sheets .tools button { gap: 4px; }
.sheets .tools .caret { margin-left: 3px; }
.filter { height: 27px; flex: none; padding-left: 2px; }
.clip { height: 158px; flex: none; overflow: hidden; }
.sheets table { width: 240px; margin-left: -1px; }
.c-no { width: 23px; }
.c-sheet { width: 111px; }
.c-scale { width: 51px; }
.sheets td { text-align: center; }
.sheets td:nth-child(2) { padding: 0; }
.sheets .on td { background: var(--steel); }
.node, .leaf { display: flex; align-items: center; gap: 5px; height: 20px; }
.node span, .leaf span { padding-top: 2px; }
.node svg { width: 16px; height: 20px; stroke: #8a8c8e; }
.node.deep svg { width: 26px; }
.leaf svg { width: 36px; height: 20px; stroke: #5a5b5d; }
.sheets .hbar { margin: 4px 0 0 15px; border-radius: 4px 0 0 4px; }

.layers { flex: 1; margin-top: 5px; border-right: 0; }
.layers .tools { gap: 6px; padding-left: 4px; height: 28px; }
.layers .tools .caret { margin-left: 6px; }
.layers table { width: 239px; margin: 5px 0 0 -1px; }
.c-on { width: 51px; }
.c-color { width: 36px; }
.layers td { height: 26px; padding-top: 0; }
.layers td:first-child { padding-top: 6px; }
.layers td:nth-child(2) { text-align: center; }
.layers td:last-child { padding-left: 3px; }
.play { display: inline-block; border: 4px solid transparent; border-left: 8px solid #9a9a9a; border-right: 0; vertical-align: middle; }
```
